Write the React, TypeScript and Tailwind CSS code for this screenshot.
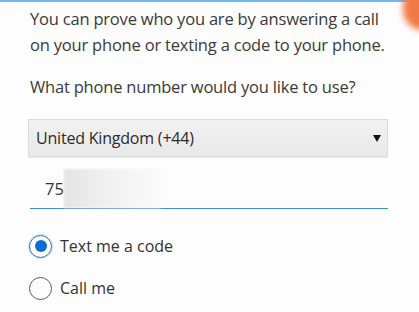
import React from "react";

const font = { fontFamily: '"Open Sans", "Noto Sans", sans-serif' };

const Radio: React.FC<{ checked?: boolean; label: string }> = ({
  checked,
  label,
}) => (
  <label className="flex items-center gap-[8px] h-[30px] text-[16px] text-[#333]">
    <span
      className={
        checked
          ? "flex items-center justify-center w-[23px] h-[23px] rounded-full border-[1.5px] border-[#1a73c8] shadow-[0_0_0_1px_rgba(120,180,240,0.35)]"
          : "flex items-center justify-center w-[23px] h-[23px] rounded-full border-[1.5px] border-[#5a5a5a]"
      }
    >
      {checked && <span className="w-[12px] h-[12px] rounded-full bg-[#0b6fd1]" />}
    </span>
    <span>{label}</span>
  </label>
);

export default function App() {
  return (
    <div
      className="relative w-[419px] h-[312px] overflow-hidden bg-[#fdfdfd]"
      style={font}
    >
      {/* top accent line */}
      <div className="h-[2px] w-full bg-[#6ab8f0]" />
      {/* orange blob peeking in at the corner */}
      <div className="absolute right-[-24px] top-[-14px] w-[40px] h-[44px] rounded-full bg-[#f07a45] blur-[3px]" />

      <div className="flex flex-col pl-[30px] pr-[31px] pt-[4px]">
        <p className="text-[16.5px] leading-[26px] text-[#3a3a3a] tracking-[-0.2px]">
          You can prove who you are by answering a call
          <br />
          on your phone or texting a code to your phone.
        </p>

        <p className="mt-[16px] text-[16.5px] leading-[26px] text-[#3a3a3a] tracking-[-0.2px]">
          What phone number would you like to use?
        </p>

        <div className="mt-[19px] -ml-[2px] flex items-center justify-between h-[38px] pl-[7px] pr-[6px] border border-[#dcdcdc] bg-gradient-to-b from-[#f1f1f1] to-[#e9e9e9] shadow-[0_1px_1px_rgba(0,0,0,0.08)]">
          <span className="text-[16px] text-[#2b2b2b] tracking-[-0.2px]">
            United Kingdom (+44)
          </span>
          <svg width="8" height="7" viewBox="0 0 8 7">
            <path d="M0 0 H8 L4 7 Z" fill="#111" />
          </svg>
        </div>

        <div className="mt-[11px] flex items-center h-[41px] border-b border-[#3d8fd8]">
          <span className="pl-[15px] pt-[3px] text-[16.5px] text-[#333]">75</span>
          <div className="h-[39px] w-[97px] bg-gradient-to-r from-[#e4e4e4] via-[#f2f2f2] to-[#fbfbfb] blur-[1px]" />
        </div>

        <div className="mt-[22px] flex flex-col gap-[12px] -ml-[1px]">
          <Radio checked label="Text me a code" />
          <Radio label="Call me" />
        </div>
      </div>
    </div>
  );
}
